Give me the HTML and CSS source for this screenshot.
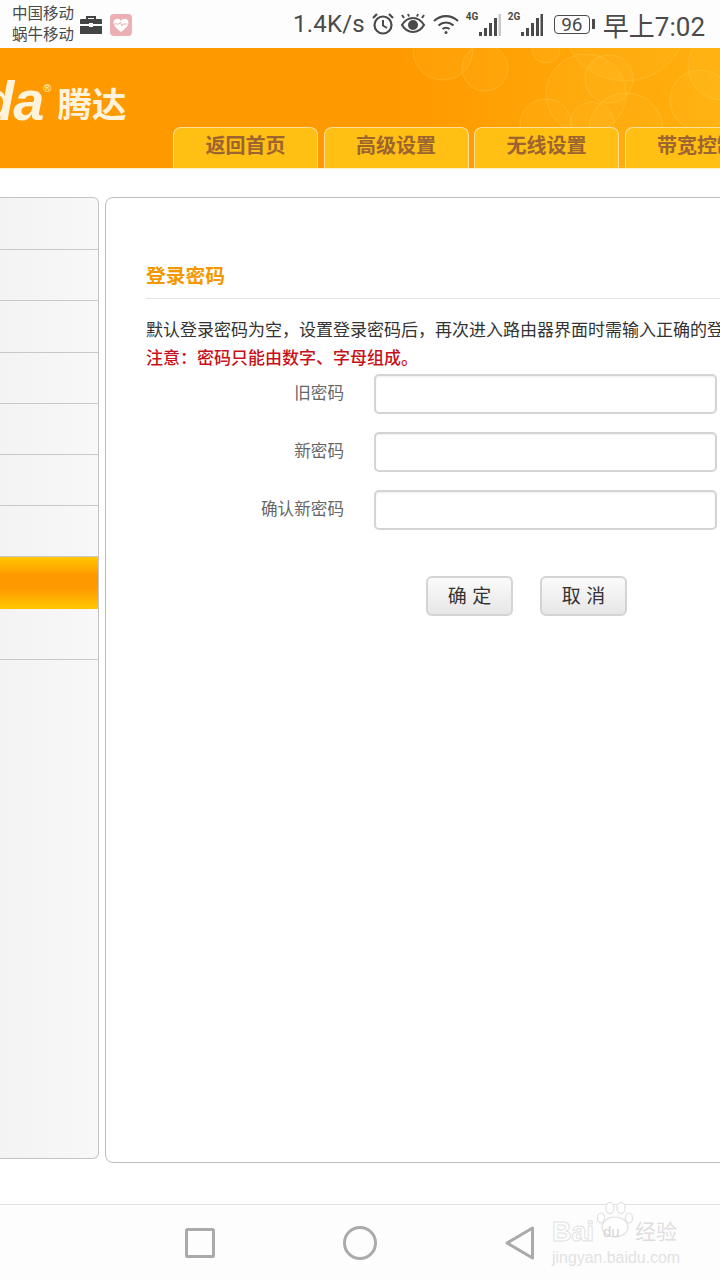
FILE: index.html
```html
<!DOCTYPE html>
<html lang="zh-CN">

<head>
    <meta charset="UTF-8">
    <meta name="viewport" content="width=device-width, initial-scale=1.0">
    <title>登录密码</title>
    <link rel="stylesheet" href="styles.css">
</head>

<body>
    <div class="status-bar">
        <div class="carriers">
            <span>中国移动</span>
            <span>蜗牛移动</span>
        </div>
        <svg class="icon-case" width="24" height="20" viewBox="0 0 24 20">
            <path d="M8 4V2h8v2" fill="none" stroke="#444" stroke-width="2"/>
            <path d="M1 5a1 1 0 0 1 1-1h20a1 1 0 0 1 1 1v4H14V8h-4v1H1z" fill="#444"/>
            <path d="M1 11h9v1h4v-1h9v8H1z" fill="#444"/>
        </svg>
        <svg class="icon-health" width="22" height="22" viewBox="0 0 22 22">
            <rect width="22" height="22" rx="4" fill="#ecb0b4"/>
            <path d="M11 18C6 14 3.500 11.500 3.500 8.500 3.500 4.500 9 3.500 11 7c2-3.500 7.500-2.500 7.500 1.500 0 3-2.500 5.500-7.500 9.500z" fill="#fff"/>
            <path d="M4 10h5l1.500-2 1.500 4 1.500-2h4" fill="none" stroke="#ecb0b4" stroke-width="1"/>
        </svg>
        <span class="speed">1.4K/s</span>
        <svg class="icon-alarm" width="24" height="24" viewBox="0 0 24 24" fill="none" stroke="#4a4a4a">
            <circle cx="12" cy="13" r="8.500" stroke-width="2.200"/>
            <path d="M12 8v5.500l4 2.500" stroke-width="2"/>
            <path d="M2 6l4-4M22 6l-4-4" stroke-width="2.200"/>
        </svg>
        <svg class="icon-eye" width="26" height="22" viewBox="0 0 26 22">
            <path d="M2 12c3-5 7-7 11-7s8 2 11 7c-3 5-7 7-11 7s-8-2-11-7z" fill="none" stroke="#4a4a4a" stroke-width="2.200"/>
            <circle cx="13" cy="12" r="5" fill="#4a4a4a"/>
            <path d="M4 5L2 2M9 3.500L8 1M17 3.500L18 1M22 5l2-3" stroke="#4a4a4a" stroke-width="2"/>
        </svg>
        <svg class="icon-wifi" width="26" height="22" viewBox="0 0 26 22" fill="none" stroke="#4a4a4a" stroke-width="2.200">
            <path d="M1 8c7-6.500 17-6.500 24 0"/>
            <path d="M5.500 12.500c4.500-4 10.500-4 15 0"/>
            <path d="M9.500 16c2-1.700 5-1.700 7 0"/>
            <circle cx="13" cy="19.500" r="1.500" fill="#4a4a4a" stroke="none"/>
        </svg>
        <div class="signal">
            <span class="net-type">4G</span>
            <svg width="22" height="24" viewBox="0 0 22 24">
                <rect x="0" y="19" width="3" height="4" fill="#4a4a4a"/>
                <rect x="5" y="15" width="3" height="8" fill="#4a4a4a"/>
                <rect x="10" y="10" width="3" height="13" fill="#4a4a4a"/>
                <rect x="15" y="5" width="3" height="18" fill="#4a4a4a"/>
                <rect x="19.500" y="1" width="2.500" height="22" fill="#c8c8c8"/>
            </svg>
        </div>
        <div class="signal">
            <span class="net-type">2G</span>
            <svg width="22" height="24" viewBox="0 0 22 24">
                <rect x="0" y="19" width="3" height="4" fill="#4a4a4a"/>
                <rect x="5" y="15" width="3" height="8" fill="#4a4a4a"/>
                <rect x="10" y="10" width="3" height="13" fill="#4a4a4a"/>
                <rect x="15" y="5" width="3" height="18" fill="#4a4a4a"/>
                <rect x="19.500" y="1" width="2.500" height="22" fill="#4a4a4a"/>
            </svg>
        </div>
        <div class="battery">
            <span class="battery-level">96</span>
            <span class="battery-tip"></span>
        </div>
        <span class="clock">早上7:02</span>
    </div>

    <div class="header">
        <svg class="bubbles" width="720" height="120" viewBox="0 0 720 120">
            <g fill="#ffd23a" fill-opacity="0.1" stroke="#ffe27a" stroke-opacity="0.22">
                <circle cx="443" cy="2" r="30"/>
                <circle cx="485" cy="20" r="23"/>
                <circle cx="546" cy="1" r="14"/>
                <circle cx="625" cy="-30" r="63"/>
                <circle cx="586" cy="46" r="40"/>
                <circle cx="609" cy="31" r="24"/>
                <circle cx="546" cy="77" r="26"/>
                <circle cx="592" cy="76" r="22"/>
                <circle cx="626" cy="82" r="37"/>
                <circle cx="700" cy="52" r="30"/>
                <circle cx="722" cy="18" r="34"/>
            </g>
        </svg>
        <div class="logo">
            <span class="logo-latin">da</span>
            <span class="logo-mark">®</span>
            <span class="logo-cn">腾达</span>
        </div>
        <div class="tabs">
            <a class="tab">返回首页</a>
            <a class="tab">高级设置</a>
            <a class="tab">无线设置</a>
            <a class="tab">带宽控制</a>
        </div>
    </div>

    <div class="page">
        <div class="sidebar">
            <div class="side-item"></div>
            <div class="side-item"></div>
            <div class="side-item"></div>
            <div class="side-item"></div>
            <div class="side-item"></div>
            <div class="side-item"></div>
            <div class="side-item"></div>
            <div class="side-item active"></div>
            <div class="side-item"></div>
        </div>
        <div class="main">
            <h2 class="title">登录密码</h2>
            <p class="desc">默认登录密码为空，设置登录密码后，再次进入路由器界面时需输入正确的登录密码。</p>
            <p class="note">注意：密码只能由数字、字母组成。</p>
            <div class="form-group">
                <label for="oldPwd">旧密码</label>
                <input type="password" id="oldPwd">
            </div>
            <div class="form-group">
                <label for="newPwd">新密码</label>
                <input type="password" id="newPwd">
            </div>
            <div class="form-group">
                <label for="confirmPwd">确认新密码</label>
                <input type="password" id="confirmPwd">
            </div>
            <div class="actions">
                <button>确 定</button>
                <button>取 消</button>
            </div>
        </div>
    </div>

    <div class="nav-bar">
        <svg class="nav-square" width="30" height="30" viewBox="0 0 30 30">
            <rect x="1.500" y="1.500" width="27" height="27" rx="1" fill="none" stroke="#aaa" stroke-width="3"/>
        </svg>
        <svg class="nav-circle" width="34" height="34" viewBox="0 0 34 34">
            <circle cx="17" cy="17" r="15.500" fill="none" stroke="#aaa" stroke-width="3"/>
        </svg>
        <svg class="nav-back" width="30" height="34" viewBox="0 0 30 34">
            <path d="M27.500 2v30L2 17z" fill="none" stroke="#aaa" stroke-width="3" stroke-linejoin="round"/>
        </svg>
        <div class="watermark">
            <div class="wm-top">
                <span class="wm-bai">Bai</span>
                <span class="wm-paw">
                    <svg class="wm-paw-icon" width="38" height="36" viewBox="0 0 38 36" fill="white" stroke="#e0e0e0" stroke-width="1.200">
                        <ellipse cx="5" cy="16" rx="3.500" ry="5"/>
                        <ellipse cx="14" cy="6" rx="4" ry="5.500"/>
                        <ellipse cx="25" cy="6" rx="4" ry="5.500"/>
                        <ellipse cx="33" cy="16" rx="3.500" ry="5"/>
                        <ellipse cx="19" cy="25" rx="13" ry="10"/>
                    </svg>
                    <span class="wm-du">du</span>
                </span>
                <span class="wm-cn">经验</span>
            </div>
            <div class="wm-url">jingyan.baidu.com</div>
        </div>
    </div>
</body>

</html>
```
FILE: styles.css
```css
* {
    box-sizing: border-box;
}

body {
    font-family: "Liberation Sans", "Noto Sans CJK SC", sans-serif;
    margin: 0;
    width: 720px;
    height: 1280px;
    overflow: hidden;
    background-color: white;
    color: #333;
}

/* status bar */
.status-bar {
    height: 48px;
    display: flex;
    align-items: center;
    padding-left: 12px;
    color: #4a4a4a;
    background-color: #fdfdfd;
}

.carriers {
    display: flex;
    flex-direction: column;
    width: 64px;
    font-size: 15.500px;
    line-height: 21px;
    white-space: nowrap;
}

.icon-case {
    margin-left: 3px;
    margin-top: 2px;
}

.icon-health {
    margin-left: 7px;
    margin-top: 2px;
}

.speed {
    margin-left: 161px;
    font-family: Roboto, sans-serif;
    font-size: 24px;
    letter-spacing: 0.2px;
}

.icon-alarm {
    margin-left: 6px;
}

.icon-eye {
    margin-left: 5px;
}

.icon-wifi {
    margin-left: 7px;
}

.signal {
    display: flex;
    align-items: flex-end;
    margin-left: 7px;
    height: 26px;
}

.net-type {
    align-self: flex-start;
    font-family: Roboto, sans-serif;
    font-size: 10px;
    font-weight: bold;
    line-height: 12px;
    width: 13px;
}

.battery {
    display: flex;
    align-items: center;
    margin-left: 11px;
}

.battery-level {
    width: 36px;
    height: 19px;
    border: 1px solid #4a4a4a;
    border-radius: 4px;
    font-family: Roboto, sans-serif;
    font-size: 19px;
    line-height: 17px;
    text-align: center;
}

.battery-tip {
    width: 3px;
    height: 10px;
    margin-left: 2px;
    background-color: #4a4a4a;
}

.clock {
    margin-left: 8px;
    font-family: Roboto, "Noto Sans CJK SC", sans-serif;
    font-size: 26px;
    white-space: nowrap;
}

/* orange header */
.header {
    position: relative;
    height: 121px;
    background: linear-gradient(to right, #ff9900 55%, #ffb00e);
    overflow: hidden;
    border-bottom: 1px solid #fff0c8;
}

.bubbles {
    position: absolute;
    top: 0;
    left: 0;
}

.logo {
    position: absolute;
    top: 23px;
    left: -20px;
    display: flex;
    align-items: flex-start;
    color: #fff3dc;
    white-space: nowrap;
}

.logo-latin {
    font-family: "Liberation Sans", sans-serif;
    font-size: 56px;
    font-weight: bold;
    font-style: italic;
    line-height: 60px;
    letter-spacing: -1px;
}

.logo-mark {
    font-size: 11px;
    line-height: 12px;
    margin-top: 11px;
}

.logo-cn {
    font-size: 34.500px;
    font-weight: bold;
    line-height: 44px;
    margin-top: 12px;
    margin-left: 6px;
}

.tabs {
    position: absolute;
    left: 173px;
    bottom: 0;
    display: flex;
    gap: 5.500px;
}

.tab {
    flex: none;
    width: 145px;
    height: 41px;
    border: 1px solid #ffdf98;
    border-bottom: none;
    border-radius: 8px 8px 0 0;
    background-color: #ffbf13;
    color: #9c6430;
    font-size: 20px;
    font-weight: bold;
    line-height: 37px;
    text-align: center;
    white-space: nowrap;
}

/* page body */
.page {
    display: flex;
    align-items: flex-start;
    padding-top: 28px;
    height: 1035px;
    gap: 6px;
}

.sidebar {
    flex: none;
    width: 99px;
    height: 962px;
    border: 1px solid #c4c4c4;
    border-left: none;
    border-radius: 0 6px 6px 0;
    background: linear-gradient(to right, #f3f3f3, #f8f8f8);
}

.side-item {
    height: 51.200px;
    border-bottom: 1px solid #c8c8c8;
}

.side-item:first-child {
    height: 52.200px;
}

.side-item.active {
    border-bottom: none;
    background: linear-gradient(to bottom, #ffc800, #ff9900 35%, #ff9900 60%, #ffc800);
}

.main {
    flex: none;
    width: 640px;
    height: 966px;
    padding: 61px 0 0 40px;
    border: 1px solid #bdbdbd;
    border-radius: 8px;
    background-color: white;
}

.title {
    margin: 0 0 16px;
    padding-bottom: 5px;
    border-bottom: 1px solid #e4e4e4;
    color: #f39800;
    font-size: 19.800px;
    line-height: 34px;
}

.desc {
    margin: 0;
    font-size: 17px;
    line-height: 32px;
    white-space: nowrap;
    color: #333;
}

.note {
    margin: 0;
    font-size: 17px;
    font-weight: 500;
    line-height: 24px;
    color: #c8101a;
    white-space: nowrap;
}

.form-group {
    display: flex;
    align-items: center;
    height: 40px;
    margin-bottom: 18px;
}

.note + .form-group {
    margin-top: 3px;
}

.form-group label {
    width: 198px;
    padding-bottom: 5px;
    font-size: 16.600px;
    color: #666;
    text-align: right;
}

.form-group input {
    width: 343px;
    height: 40px;
    margin-left: 30px;
    border: 2px solid #d4d4d4;
    border-radius: 5px;
    background-color: white;
    box-shadow: inset 0 1px 2px #eee;
}

.actions {
    display: flex;
    gap: 27px;
    padding-left: 280px;
    padding-top: 28px;
}

.actions button {
    width: 87px;
    height: 40px;
    border: 2px solid #d4d4d4;
    border-radius: 6px;
    background: linear-gradient(to bottom, #fbfbfb, #e6e6e6);
    color: #333;
    font-family: inherit;
    font-size: 19px;
    padding: 0 0 4px;
}

/* bottom nav */
.nav-bar {
    position: relative;
    display: flex;
    align-items: center;
    height: 76px;
    border-top: 1px solid #e2e2e2;
    background-color: #fdfdfd;
}

.nav-square {
    margin-left: 185px;
}

.nav-circle {
    margin-left: 128px;
}

.nav-back {
    margin-left: 128px;
}

.watermark {
    position: absolute;
    left: 552px;
    top: 14px;
    white-space: nowrap;
}

.wm-top {
    display: flex;
    align-items: flex-end;
    height: 26px;
}

.wm-bai {
    font-size: 27px;
    font-weight: bold;
    line-height: 26px;
    color: white;
    -webkit-text-stroke: 1px #e2e2e2;
}

.wm-paw {
    position: relative;
    width: 38px;
    height: 26px;
    margin-left: 2px;
}

.wm-paw-icon {
    position: absolute;
    left: 0;
    bottom: 7px;
}

.wm-du {
    position: absolute;
    left: 7px;
    bottom: 4px;
    font-size: 15px;
    line-height: 18px;
    color: #d4d4d4;
}

.wm-cn {
    margin-left: 1px;
    font-size: 21px;
    line-height: 26px;
    color: #dedede;
}

.wm-url {
    margin-top: 4px;
    font-size: 15.900px;
    line-height: 18px;
    color: #e2e2e2;
}
```
